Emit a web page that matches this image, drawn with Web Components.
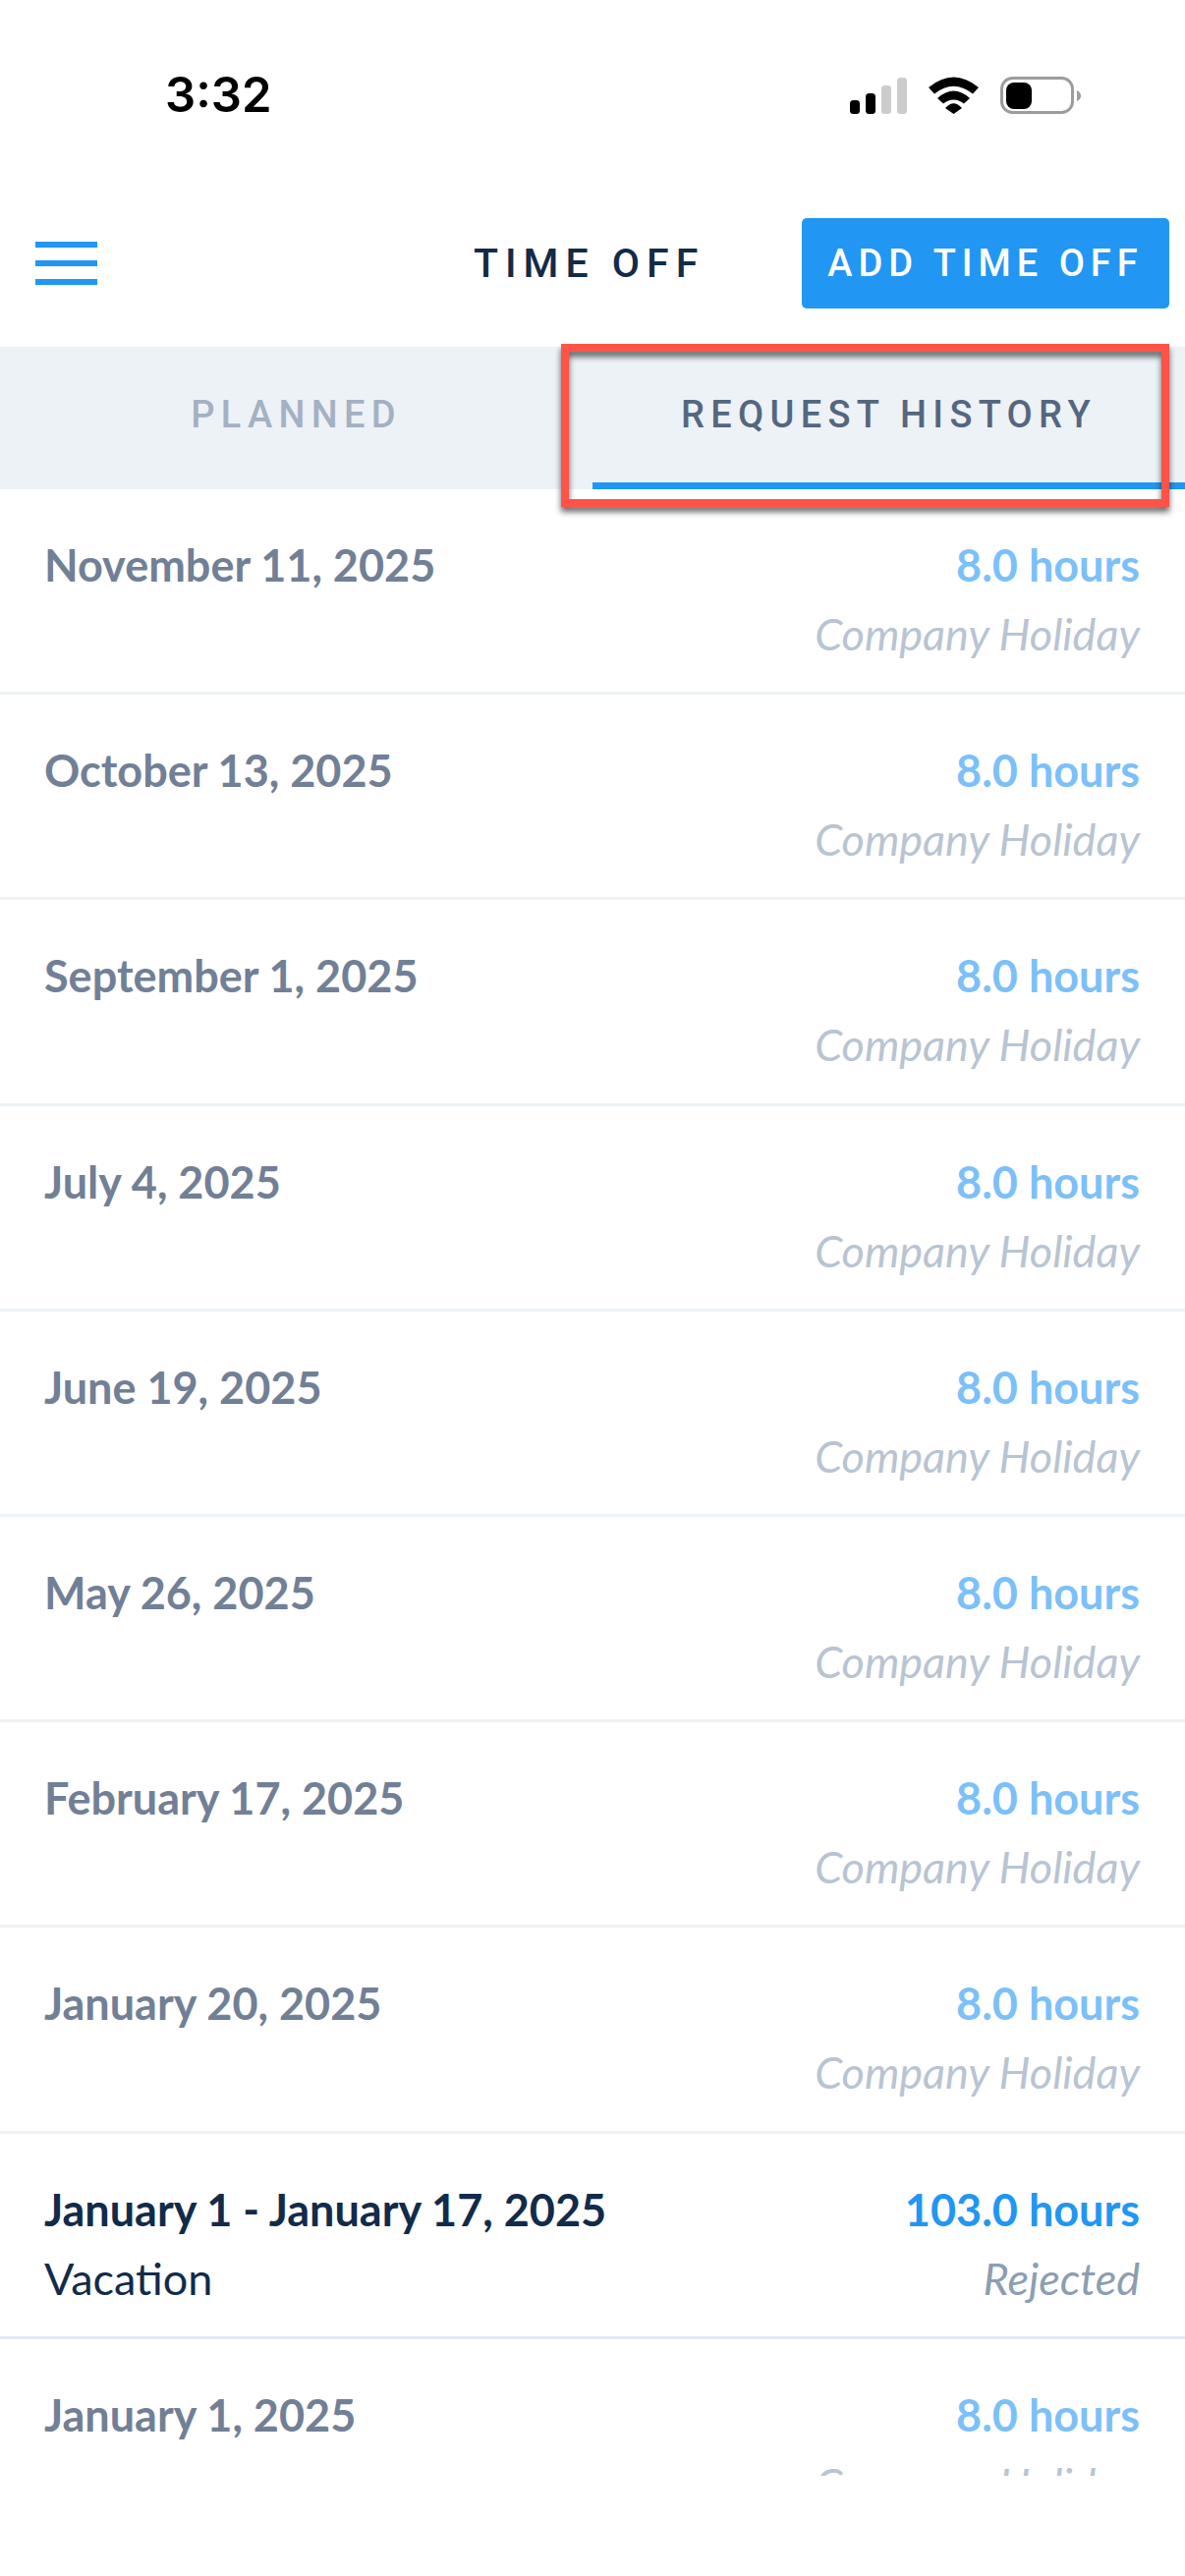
<!DOCTYPE html>
<html lang="en"><head><meta charset="utf-8"><title>Time Off</title>
<style>html,body{margin:0;padding:0;background:#fff}</style></head>
<body>
<app-screen>
  <status-bar time="3:32"></status-bar>
  <app-header title="TIME OFF" action="ADD TIME OFF"></app-header>
  <tab-bar>
    <tab-item>PLANNED</tab-item>
    <tab-item active>REQUEST HISTORY</tab-item>
  </tab-bar>
  <time-list>
    <time-row date="November 11, 2025" hours="8.0 hours" note="Company Holiday"></time-row>
    <time-row date="October 13, 2025" hours="8.0 hours" note="Company Holiday"></time-row>
    <time-row date="September 1, 2025" hours="8.0 hours" note="Company Holiday"></time-row>
    <time-row date="July 4, 2025" hours="8.0 hours" note="Company Holiday"></time-row>
    <time-row date="June 19, 2025" hours="8.0 hours" note="Company Holiday"></time-row>
    <time-row date="May 26, 2025" hours="8.0 hours" note="Company Holiday"></time-row>
    <time-row date="February 17, 2025" hours="8.0 hours" note="Company Holiday"></time-row>
    <time-row date="January 20, 2025" hours="8.0 hours" note="Company Holiday"></time-row>
    <time-row active date="January 1 - January 17, 2025" kind="Vacation" hours="103.0 hours" note="Rejected"></time-row>
    <time-row date="January 1, 2025" hours="8.0 hours" note="Company Holiday"></time-row>
  </time-list>
  <note-box></note-box>
</app-screen>
<script>
function el(name, css, html){
  customElements.define(name, class extends HTMLElement{
    connectedCallback(){
      if(this.shadowRoot) return;
      const r=this.attachShadow({mode:'open'});
      const a=n=>this.getAttribute(n)||'';
      r.innerHTML='<style>'+css+'</style>'+(typeof html==='function'?html(a,this):html);
    }
  });
}
el('app-screen',`:host{display:flex;flex-direction:column;position:relative;width:1206px;height:2622px;overflow:hidden;background:#fff}`,`<slot></slot>`);
el('status-bar',`:host{display:flex;justify-content:space-between;align-items:flex-start;box-sizing:border-box;height:222px;padding:78px 106px 0 168px}
.t{font:600 49px/38px Inter,sans-serif;color:#000}
.i{display:flex;align-items:flex-start;gap:22px}
svg{display:block}`,a=>`<div class="t">${a('time')}</div><div class="i">
<svg width="58" height="38" viewBox="0 0 58 38"><rect x="0" y="24" width="10" height="14" rx="3.5" fill="#000"/><rect x="16" y="17" width="10" height="21" rx="3.5" fill="#000"/><rect x="32" y="9" width="10" height="29" rx="3.5" fill="#ccc"/><rect x="48" y="1" width="10" height="37" rx="3.5" fill="#ccc"/></svg>
<svg width="51" height="38" viewBox="0 0 51 38"><path d="M0 11Q25.500-10 51 11L45 17.500Q25.500 2 6 17.500ZM9 22Q25.500 7 42 22L36 27.500Q25.500 19.500 15 27.500ZM17 32Q25.500 22.500 34 32L25.500 38Z" fill="#000"/></svg>
<svg width="82" height="38" viewBox="0 0 82 38"><rect x="1.500" y="1.500" width="72" height="35" rx="11" fill="none" stroke="#9c9c9c" stroke-width="3"/><rect x="6" y="6" width="26" height="27" rx="8" fill="#000"/><path d="M78 14Q82 16 82 19.500Q82 23 78 25Z" fill="#9c9c9c"/></svg>
</div>`);
el('app-header',`:host{display:flex;align-items:center;box-sizing:border-box;height:131px;padding:0 16px 39px 36px}
.m{display:flex;flex-direction:column;gap:13px;width:63px}.m i{display:block;height:6px;background:#2196f3}
.t{margin-left:383px;font:500 41px/1 Roboto,sans-serif;letter-spacing:7px;color:#122b4a}
.b{margin-left:auto;box-sizing:border-box;width:374px;height:92px;display:flex;align-items:center;justify-content:center;background:#2196f3;color:#fff;border-radius:5px;font:500 38px/1 Roboto,sans-serif;letter-spacing:6px}`,
a=>`<div class="m"><i></i><i></i><i></i></div><div class="t">${a('title')}</div><div class="b">${a('action')}</div>`);
el('tab-bar',`:host{display:flex;height:145px;background:#edf2f7}`,`<slot></slot>`);
el('tab-item',`:host{flex:1;display:flex;box-sizing:border-box;align-items:center;justify-content:center;padding-bottom:1px;border-bottom:7px solid transparent;font:500 38px/1 Roboto,sans-serif;letter-spacing:6.3px;color:#a3b1c2}
:host([active]){color:#54677f;border-bottom-color:#2196f3}`,`<slot></slot>`);
el('time-list',`:host{display:block;height:2022px;overflow:hidden;flex:none}`,`<slot></slot>`);
el('time-row',`:host{display:grid;grid-template-columns:1fr auto;align-content:start;box-sizing:border-box;height:209.2px;padding:42px 46px 0 45px;border-bottom:3px solid #edf2f7;font:45px/70px Lato,sans-serif}
.d{font-weight:700;color:#718096}.h{font-weight:700;color:#7cc0f9;text-align:right}.k{color:#122b4a}.n{font-style:italic;font-weight:400;color:#b8c4d2;text-align:right}
:host([active]){border-bottom-color:#e1e9f2}
:host([active]) .d{color:#122b4a}:host([active]) .h{color:#2196f3}:host([active]) .n{color:#8c9eb2}`,
a=>`<div class="d">${a('date')}</div><div class="h">${a('hours')}</div><div class="k">${a('kind')}</div><div class="n">${a('note')}</div>`);
el('note-box',`:host{position:absolute;left:571px;top:350px;width:619px;height:166px;box-sizing:border-box;border:8px solid #ff5347;filter:drop-shadow(0 5px 3px rgba(0,0,0,.6))}`,``);
</script>
</body></html>
